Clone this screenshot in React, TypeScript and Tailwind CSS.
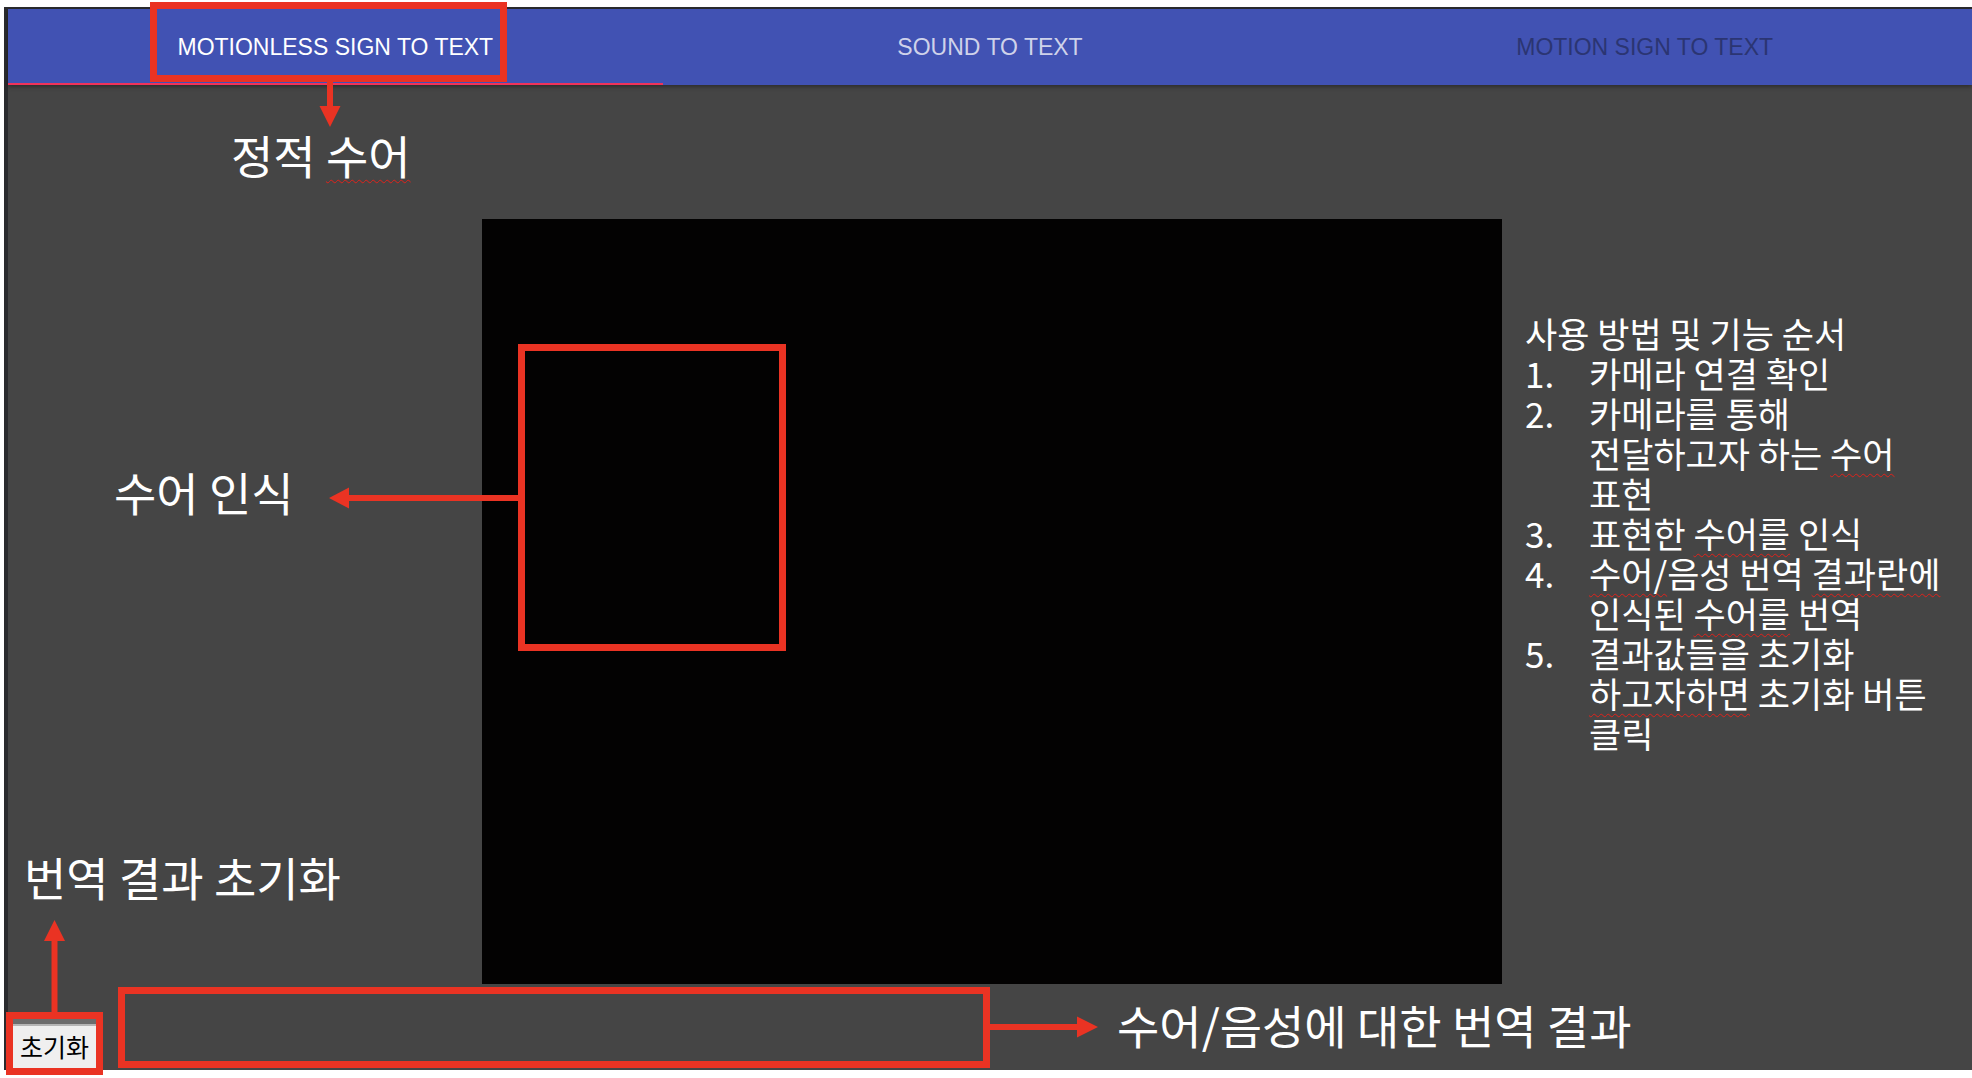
import React from "react"

const kr = { fontFamily: '"Noto Sans CJK KR", "Noto Sans", sans-serif' }
const latin = { fontFamily: '"Liberation Sans", Arial, sans-serif' }

function Wavy({ children }: { children: React.ReactNode }) {
  return (
    <span className="underline decoration-wavy decoration-[#e0221b] decoration-1 underline-offset-[5px]">
      {children}
    </span>
  )
}

const steps: { n: string; lines: React.ReactNode[] }[] = [
  { n: "1.", lines: ["카메라 연결 확인"] },
  {
    n: "2.",
    lines: [
      "카메라를 통해",
      <>
        전달하고자 하는 <Wavy>수어</Wavy>
      </>,
      "표현",
    ],
  },
  {
    n: "3.",
    lines: [
      <>
        표현한 <Wavy>수어를</Wavy> 인식
      </>,
    ],
  },
  {
    n: "4.",
    lines: [
      <>
        <Wavy>수어/</Wavy>음성 번역 <Wavy>결과란에</Wavy>
      </>,
      <>
        인식된 <Wavy>수어를</Wavy> 번역
      </>,
    ],
  },
  {
    n: "5.",
    lines: [
      "결과값들을 초기화",
      <>
        <Wavy>하고자하면</Wavy> 초기화 버튼
      </>,
      "클릭",
    ],
  },
]

function Tabs() {
  return (
    <nav
      className="relative z-10 flex h-[76px] bg-[#4152b3] shadow-[0_2px_4px_rgba(0,0,0,0.35)]"
      style={latin}
    >
      <button className="relative flex flex-1 items-center justify-center text-[23px] uppercase text-white">
        Motionless sign to text
        <span className="absolute bottom-0 left-0 h-[2px] w-full bg-[#f0325a]" />
      </button>
      <button className="flex flex-1 items-center justify-center text-[23px] uppercase text-[#cfd2ea]">
        Sound to text
      </button>
      <button className="flex flex-1 items-center justify-center text-[23px] uppercase text-[#2b3572]">
        Motion sign to text
      </button>
    </nav>
  )
}

function Instructions() {
  return (
    <div className="pl-[23px] pt-[94px] text-[35px] leading-[40px] text-white" style={kr}>
      <div className="whitespace-nowrap">사용 방법 및 기능 순서</div>
      {steps.map((s) => (
        <div key={s.n} className="flex">
          <span className="w-[64px] shrink-0">{s.n}</span>
          <div className="flex flex-col whitespace-nowrap">
            {s.lines.map((l, i) => (
              <span key={i}>{l}</span>
            ))}
          </div>
        </div>
      ))}
    </div>
  )
}

function Annotations() {
  const red = "#ea3323"
  return (
    <div className="pointer-events-none absolute inset-0 z-20">
      <svg className="absolute inset-0" width="1972" height="1078">
        <g fill="none" stroke={red} strokeWidth="7">
          <rect x="153.5" y="5.5" width="350" height="73" />
          <rect x="521.5" y="347.5" width="261" height="300" />
          <rect x="9.5" y="1015.5" width="90" height="56" />
          <rect x="121.5" y="990.5" width="865" height="74" />
          <line x1="330" y1="82" x2="330" y2="110" strokeWidth="6" />
          <line x1="518" y1="498" x2="346" y2="498" strokeWidth="6" />
          <line x1="54.5" y1="1012" x2="54.5" y2="938" strokeWidth="6" />
          <line x1="990" y1="1027" x2="1080" y2="1027" strokeWidth="6" />
        </g>
        <g fill={red}>
          <polygon points="319.5,106 340.5,106 330,127" />
          <polygon points="349,487.5 349,508.5 329,498" />
          <polygon points="44,941 65,941 54.5,920" />
          <polygon points="1077,1016.5 1077,1037.5 1098,1027" />
        </g>
      </svg>
      <div className="absolute inset-0 text-[46px] leading-[46px] text-white" style={kr}>
        <div className="absolute left-[231px] top-[131px] whitespace-nowrap">
          정적 <Wavy>수어</Wavy>
        </div>
        <div className="absolute left-[114px] top-[468px] whitespace-nowrap">수어 인식</div>
        <div className="absolute left-[24px] top-[853px] whitespace-nowrap">번역 결과 초기화</div>
        <div className="absolute left-[1117px] top-[1001px] whitespace-nowrap">
          수어/음성에 대한 번역 결과
        </div>
      </div>
    </div>
  )
}

export default function App() {
  return (
    <div className="relative h-[1078px] w-[1972px] overflow-hidden bg-white pb-[8px] pl-[4px] pt-[7px]">
      <div className="flex h-full flex-col border-l-4 border-t-2 border-[#2a2b2e] bg-[#454545]">
        <Tabs />
        <main className="flex flex-1 flex-col">
          <div className="flex pt-[134px]">
            <div className="w-[474px] shrink-0" />
            <div className="h-[765px] w-[1020px] shrink-0 bg-[#030202]" />
            <Instructions />
          </div>
          <div className="mt-auto flex items-end pb-[2px] pl-[4px]">
            <button
              className="flex h-[50px] w-[85px] items-center justify-center border-t-[6px] border-[#6c6c6c] bg-[#efefef] pt-[1px] text-[25px] text-black shadow-[inset_0_2px_0_#b5b5b5]"
              style={kr}
            >
              초기화
            </button>
          </div>
        </main>
      </div>
      <Annotations />
    </div>
  )
}
